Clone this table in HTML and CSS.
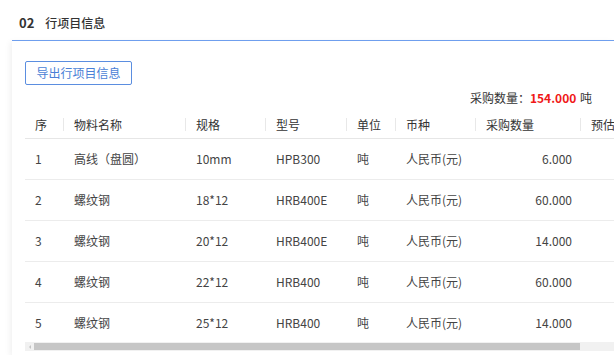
FILE: index.html
```html
<!DOCTYPE html>
<html lang="zh-CN">
<head>
  <meta charset="UTF-8" />
  <title>行项目信息</title>
  <link rel="stylesheet" href="styles.css">
</head>
<body>
  <div class="section-head">
    <span class="section-no">02</span>
    <span class="section-name">行项目信息</span>
  </div>

  <div class="card">
    <button class="btn-export">导出行项目信息</button>

    <div class="summary">
      采购数量：<span class="summary-num">154.000</span> 吨
    </div>

    <table class="items">
      <colgroup>
        <col style="width:38px">
        <col style="width:122px">
        <col style="width:80px">
        <col style="width:81px">
        <col style="width:49px">
        <col style="width:80px">
        <col style="width:105px">
        <col style="width:100px">
      </colgroup>
      <thead>
        <tr>
          <th>序</th>
          <th>物料名称</th>
          <th>规格</th>
          <th>型号</th>
          <th>单位</th>
          <th>币种</th>
          <th>采购数量</th>
          <th>预估</th>
        </tr>
      </thead>
      <tbody>
        <tr>
          <td>1</td><td>高线（盘圆）</td><td>10mm</td><td>HPB300</td><td>吨</td><td>人民币(元)</td><td class="num">6.000</td><td></td>
        </tr>
        <tr>
          <td>2</td><td>螺纹钢</td><td>18*12</td><td>HRB400E</td><td>吨</td><td>人民币(元)</td><td class="num">60.000</td><td></td>
        </tr>
        <tr>
          <td>3</td><td>螺纹钢</td><td>20*12</td><td>HRB400E</td><td>吨</td><td>人民币(元)</td><td class="num">14.000</td><td></td>
        </tr>
        <tr>
          <td>4</td><td>螺纹钢</td><td>22*12</td><td>HRB400</td><td>吨</td><td>人民币(元)</td><td class="num">60.000</td><td></td>
        </tr>
        <tr>
          <td>5</td><td>螺纹钢</td><td>25*12</td><td>HRB400</td><td>吨</td><td>人民币(元)</td><td class="num">14.000</td><td></td>
        </tr>
      </tbody>
    </table>

    <div class="hscroll">
      <span class="hscroll-arrow"></span>
      <div class="hscroll-thumb"></div>
    </div>
  </div>
</body>
</html>
```

FILE: styles.css
```css
body {
  margin: 0;
  font-family: "Noto Sans CJK SC", "Noto Sans", sans-serif;
  font-size: 12px;
  background: #fff;
  color: #444;
  overflow: hidden;
}
.section-head {
  height: 40px;
  padding: 4px 0 0 19px;
  display: flex;
  align-items: center;
  gap: 11px;
  color: #333;
  box-sizing: border-box;
}
.section-no {
  font-weight: 700;
  font-size: 13px;
}
.section-name {
  font-size: 12px;
  font-weight: 500;
}
.card {
  margin-left: 12px;
  border-top: 1px solid #6f9fee;
  box-shadow: -2px 2px 6px rgba(0, 0, 0, 0.06);
  padding: 20px 0 4px 13px;
  background: #fff;
  overflow: hidden;
}
.btn-export {
  display: block;
  height: 24px;
  width: 107px;
  padding: 0;
  border: 1px solid #5b8ee0;
  border-radius: 2px;
  background: #fff;
  color: #4a7fd6;
  font-family: inherit;
  font-size: 12px;
  line-height: 22px;
}
.summary {
  width: 567px;
  margin-top: 3px;
  height: 20px;
  line-height: 20px;
  text-align: right;
  color: #333;
}
.summary-num {
  color: #f01818;
  font-weight: 700;
  margin-right: 1px;
}
.items {
  margin-top: 3px;
  border-collapse: collapse;
  table-layout: fixed;
  width: 655px;
}
.items th {
  height: 27px;
  padding: 0 11px;
  text-align: left;
  font-weight: 400;
  color: #333;
  border-bottom: 1px solid #e6e6e6;
  line-height: 16px;
}
.items th:first-child,
.items td:first-child {
  padding-left: 10px;
}
.items th + th {
  background: linear-gradient(#e8e8e8, #e8e8e8) left center / 1px 13px no-repeat;
}
.items td {
  height: 40px;
  padding: 0 11px;
  border-bottom: 1px solid #ececec;
  white-space: nowrap;
  line-height: 16px;
}
.items tbody tr:last-child td {
  border-bottom: none;
  height: 39px;
}
.items td.num {
  text-align: right;
  padding-right: 8px;
}
.hscroll {
  width: 655px;
  height: 9px;
  background: #f1f1f1;
  display: flex;
  align-items: center;
  gap: 3px;
  padding-left: 4px;
}
.hscroll-arrow {
  width: 0;
  height: 0;
  border-top: 2px solid transparent;
  border-bottom: 2px solid transparent;
  border-right: 2px solid #c4c4c4;
}
.hscroll-thumb {
  width: 546px;
  height: 7px;
  background: #c6c6c6;
}
```
